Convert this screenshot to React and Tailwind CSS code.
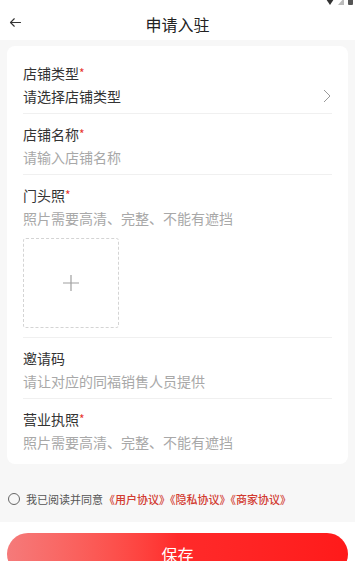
import React, { useState } from "react";

const Star = () => <span className="text-[#e8372f] text-[12px] align-top">*</span>;

const Row = ({ label, required, children, last, className = "" }) => (
  <div className={`${last ? "" : "border-b border-[#f0f0f0]"} ${className}`}>
    <div className="text-[14px] leading-[20px] text-[#333]">
      {label}
      {required && <Star />}
    </div>
    {children}
  </div>
);

const Hint = ({ children }) => (
  <div className="mt-[3px] text-[14px] leading-[20px] text-[#a8a8a8]">{children}</div>
);

const App = () => {
  const [agreed, setAgreed] = useState(false);

  return (
    <div
      className="w-[355px] h-[561px] overflow-hidden bg-white flex flex-col"
      style={{ fontFamily: '"Noto Sans CJK SC", "Noto Sans", sans-serif' }}
    >
      {/* status bar */}
      <div className="relative h-0">
        <div className="absolute right-[2px] top-[-3px] flex items-center gap-[4px]">
          <svg width="8" height="7" viewBox="0 0 8 7">
            <path d="M0 1 Q4 -1 8 1 L4 7 Z" fill="#333" />
          </svg>
          <svg width="6" height="7" viewBox="0 0 6 7">
            <path d="M6 0 V7 H0 Z" fill="#bbb" />
          </svg>
          <svg width="5" height="8" viewBox="0 0 5 8">
            <rect x="0" y="0" width="5" height="8" rx="1" fill="#555" />
          </svg>
        </div>
      </div>

      {/* header */}
      <div className="h-[40px] flex items-center relative shrink-0">
        <button className="absolute left-[8px] top-[15px] text-[#333]">
          <svg width="15" height="15" viewBox="0 0 24 24" fill="none" stroke="currentColor" strokeWidth="1.8" strokeLinecap="round" strokeLinejoin="round">
            <path d="M20 12H4M10 6l-6 6 6 6" />
          </svg>
        </button>
        <div className="flex-1 text-center text-[16px] leading-[22px] text-[#222] pt-[7px]">申请入驻</div>
      </div>

      {/* body */}
      <div className="bg-[#f7f7f7] pt-[6px] px-[7px] shrink-0">
        <div className="bg-white rounded-[8px] px-[16px] pt-[7px] pb-[12px]">
          <Row label="店铺类型" required className="pt-[10px] pb-[7px]">
            <div className="mt-[3px] flex items-center justify-between">
              <span className="text-[14px] leading-[20px] text-[#333]">请选择店铺类型</span>
              <svg width="10" height="16" viewBox="0 0 10 16" fill="none" stroke="#999" strokeWidth="1">
                <path d="M2 2l6 6-6 6" />
              </svg>
            </div>
          </Row>
          <Row label="店铺名称" required className="pt-[10px] pb-[7px]">
            <Hint>请输入店铺名称</Hint>
          </Row>
          <Row label="门头照" required className="pt-[10px] pb-[9px]">
            <Hint>照片需要高清、完整、不能有遮挡</Hint>
            <div className="mt-[10px] w-[96px] h-[90px] border border-dashed border-[#d4d4d4] rounded-[3px] flex items-center justify-center">
              <svg width="16" height="16" viewBox="0 0 16 16" stroke="#a0a0a0" strokeWidth="1.2">
                <path d="M8 0V16M0 8H16" />
              </svg>
            </div>
          </Row>
          <Row label="邀请码" className="pt-[10px] pb-[7px]">
            <Hint>请让对应的同福销售人员提供</Hint>
          </Row>
          <Row label="营业执照" required last className="pt-[10px]">
            <Hint>照片需要高清、完整、不能有遮挡</Hint>
          </Row>
        </div>

        {/* agreement */}
        <div className="pt-[27px] pb-[15px] flex items-center pl-[1px]">
          <button
            onClick={() => setAgreed(!agreed)}
            className={`w-[12px] h-[12px] rounded-full border ${agreed ? "border-[#f22] bg-[#f22]" : "border-[#666]"} mr-[6px]`}
          />
          <span className="text-[11px] leading-[16px] text-[#555]">我已阅读并同意</span>
          <span className="text-[11px] leading-[16px] text-[#d23a30] font-medium ml-[1px]">《用户协议》《隐私协议》《商家协议》</span>
        </div>
      </div>

      {/* save */}
      <div className="px-[7px] pt-[11px]">
        <button className="w-full h-[42px] rounded-full bg-gradient-to-r from-[#f57a7a] via-[#ff2a2a] to-[#ff1a1a] text-white text-[16px] leading-[22px]">
          保存
        </button>
      </div>
    </div>
  );
};

export default App;
